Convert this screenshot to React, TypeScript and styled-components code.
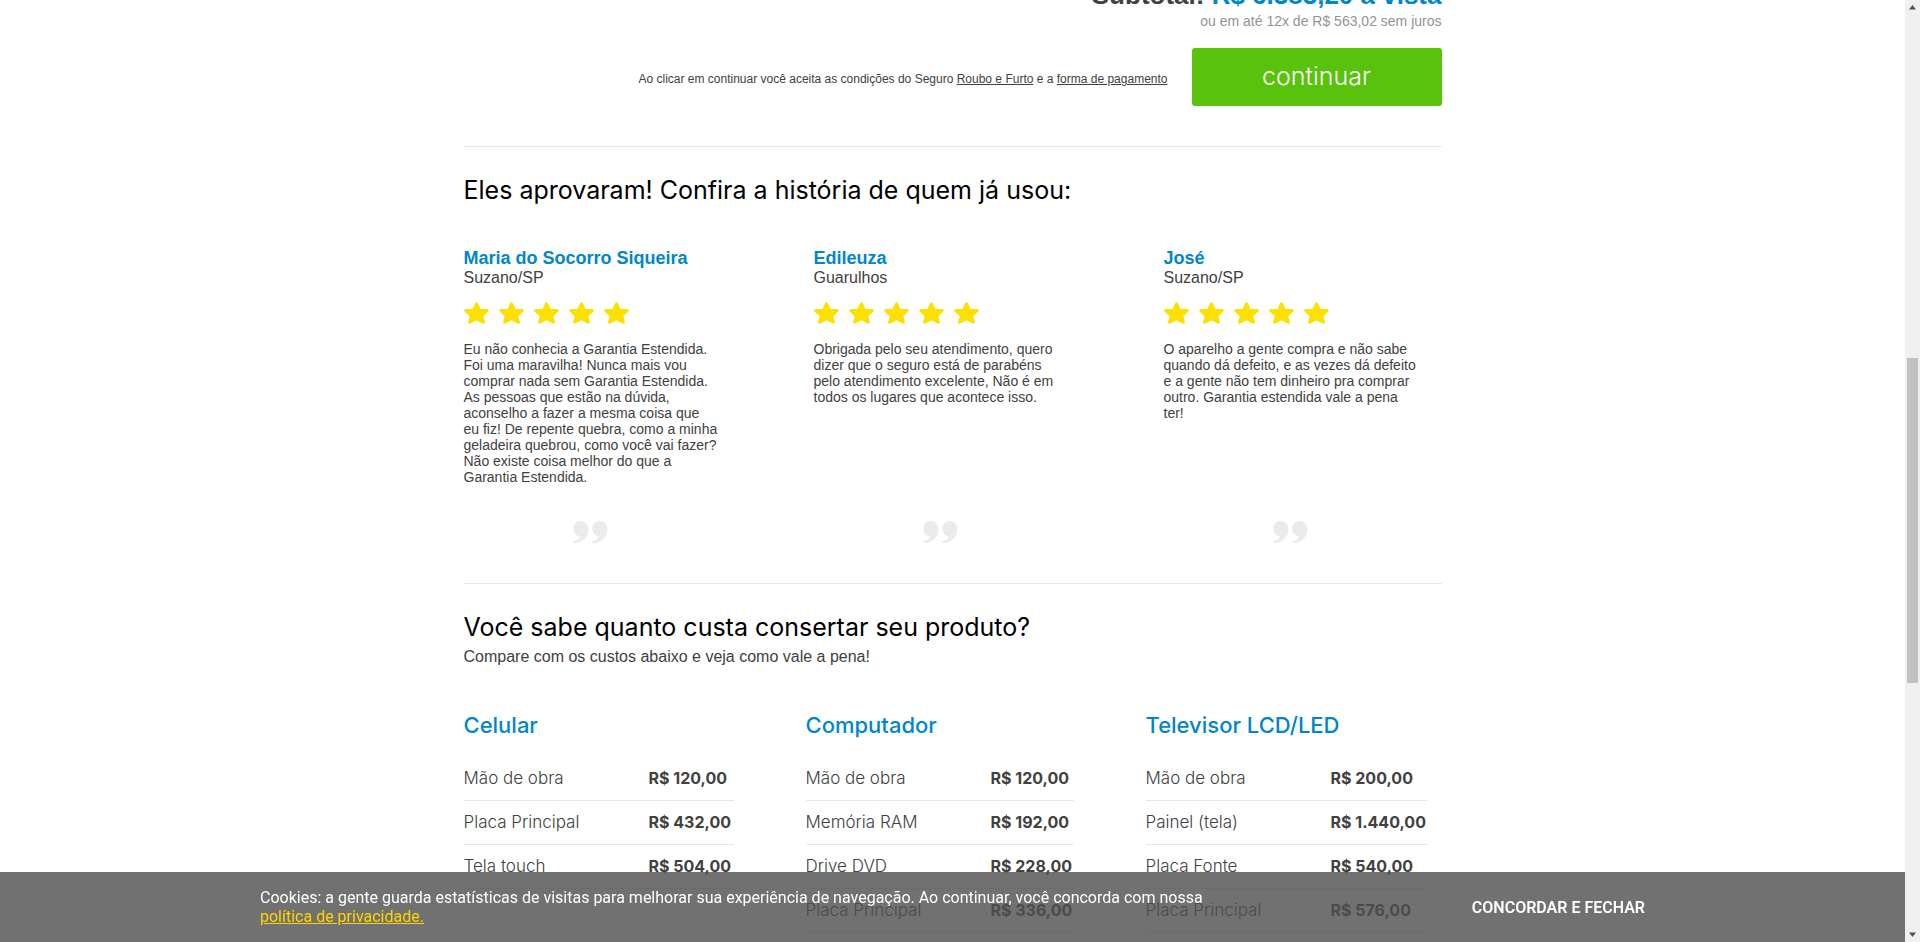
import React from "react";
import styled, { createGlobalStyle } from "styled-components";

const blue = "#0086cc";
const ink = "#414141";
const rule = "#e6e6e6";
const display = `Inter, "Liberation Sans", sans-serif`;

const GlobalStyle = createGlobalStyle`
  * { box-sizing: border-box; }
  body {
    margin: 0;
    background: #fff;
    color: ${ink};
    font-family: "Liberation Sans", Arial, sans-serif;
  }
  h2, h3, p { margin: 0; padding: 0; }
`;

const Shell = styled.div`
  display: grid;
  grid-template-columns: minmax(0, 1fr) 15px;
  height: 100vh;
  overflow: hidden;
`;

const Viewport = styled.div`
  display: flex;
  flex-direction: column;
  height: 100vh;
  overflow: hidden;
`;

const Content = styled.main`
  flex: none;
  width: 100%;
  max-width: 978px;
  margin: -20px auto 0;
`;

const Section = styled.section`
  border-top: 1px solid ${rule};
`;

const Checkout = styled.section`
  display: flex;
  flex-direction: column;
  align-items: flex-end;
  padding-bottom: 40px;
`;

const Subtotal = styled.p`
  font-size: 26px;
  line-height: 30px;
  font-weight: 700;
  color: ${ink};

  strong { color: ${blue}; }
`;

const Installments = styled.p`
  margin-top: 2px;
  font-size: 14px;
  line-height: 18px;
  color: #939393;
`;

const Actions = styled.div`
  display: flex;
  align-items: center;
  gap: 24px;
  margin-top: 18px;
`;

const Terms = styled.p`
  font-size: 12px;
  line-height: 16px;
  padding-top: 4px;

  a { color: inherit; }
`;

const ContinueButton = styled.button`
  width: 250px;
  height: 58px;
  padding: 0 0 2px;
  border: 0;
  border-radius: 3px;
  background: #58c20c;
  color: #fff;
  font: 300 25px/28px ${display};
  cursor: pointer;
`;

const Heading = styled.h2`
  padding-top: 27px;
  font: 400 25px/32px ${display};
  color: #000;
`;

const Reviews = styled.div`
  display: grid;
  grid-template-columns: repeat(3, 254px);
  column-gap: 96px;
  padding: 42px 0 40px;
`;

const Review = styled.article`
  display: flex;
  flex-direction: column;
`;

const Reviewer = styled.h3`
  font-size: 18px;
  line-height: 20px;
  color: ${blue};
`;

const City = styled.p`
  font-size: 16px;
  line-height: 20px;
`;

const Stars = styled.div`
  display: flex;
  gap: 10px;
  margin: 14px 0 17px;

  svg { display: block; }
`;

const Quote = styled.p`
  flex: 1;
  font-size: 14px;
  line-height: 16px;
`;

const QuoteMark = styled.svg`
  align-self: center;
  margin-top: 36px;
`;

const Lead = styled.p`
  font-size: 16px;
  line-height: 18px;
  padding-top: 5px;
`;

const Costs = styled.div`
  display: grid;
  grid-template-columns: 270px 268px 281px;
  column-gap: 72px;
  align-items: start;
  padding-top: 45px;
`;

const CostTable = styled.table`
  width: 100%;
  border-collapse: collapse;
  font-family: ${display};
  line-height: 20px;

  caption {
    padding-bottom: 17px;
    text-align: left;
    font-size: 22px;
    line-height: 28px;
    font-weight: 500;
    color: ${blue};
  }
  th, td {
    height: 44px;
    padding: 0;
    border-bottom: 1px solid ${rule};
    text-align: left;
    white-space: nowrap;
  }
  th {
    width: 185px;
    font-size: 17px;
    font-weight: 300;
  }
  td {
    font-size: 16px;
    font-weight: 700;
  }
`;

const CookieBar = styled.aside`
  position: fixed;
  left: 0;
  right: 15px;
  bottom: 0;
  padding: 16px 24px;
  background: rgba(77, 77, 77, 0.8);
  color: #fff;
  font-family: Roboto, sans-serif;
  font-size: 16px;
  line-height: 19px;
`;

const CookieInner = styled.div`
  display: flex;
  align-items: center;
  justify-content: space-between;
  max-width: 1385px;
  margin: 0 auto;

  p { max-width: 960px; }
  a { color: #ffd500; }
`;

const AgreeButton = styled.button`
  padding: 0;
  border: 0;
  background: none;
  color: #fff;
  font: 600 16px/19px Roboto, sans-serif;
  text-transform: uppercase;
  cursor: pointer;
`;

const Scrollbar = styled.div`
  display: flex;
  flex-direction: column;
  align-items: center;
  justify-content: space-between;
  height: 100vh;
  padding: 5px 0;
  background: #f0f0f0;

  svg { display: block; }
`;

const ScrollTrack = styled.div`
  display: grid;
  grid-template-rows: 343fr 324fr 244fr;
  flex: 1;
  width: 11px;
  margin: 5px 0;
`;

const ScrollThumb = styled.div`
  grid-row: 2;
  background: #c1c1c1;
`;

const reviews = [
  {
    name: "Maria do Socorro Siqueira",
    city: "Suzano/SP",
    text: "Eu não conhecia a Garantia Estendida. Foi uma maravilha! Nunca mais vou comprar nada sem Garantia Estendida. As pessoas que estão na dúvida, aconselho a fazer a mesma coisa que eu fiz! De repente quebra, como a minha geladeira quebrou, como você vai fazer? Não existe coisa melhor do que a Garantia Estendida.",
  },
  {
    name: "Edileuza",
    city: "Guarulhos",
    text: "Obrigada pelo seu atendimento, quero dizer que o seguro está de parabéns pelo atendimento excelente, Não é em todos os lugares que acontece isso.",
  },
  {
    name: "José",
    city: "Suzano/SP",
    text: "O aparelho a gente compra e não sabe quando dá defeito, e as vezes dá defeito e a gente não tem dinheiro pra comprar outro. Garantia estendida vale a pena ter!",
  },
];

const costs = [
  {
    title: "Celular",
    rows: [
      ["Mão de obra", "R$ 120,00"],
      ["Placa Principal", "R$ 432,00"],
      ["Tela touch", "R$ 504,00"],
    ],
  },
  {
    title: "Computador",
    rows: [
      ["Mão de obra", "R$ 120,00"],
      ["Memória RAM", "R$ 192,00"],
      ["Drive DVD", "R$ 228,00"],
      ["Placa Principal", "R$ 336,00"],
    ],
  },
  {
    title: "Televisor LCD/LED",
    rows: [
      ["Mão de obra", "R$ 200,00"],
      ["Painel (tela)", "R$ 1.440,00"],
      ["Placa Fonte", "R$ 540,00"],
      ["Placa Principal", "R$ 576,00"],
    ],
  },
];

const Star = () => (
  <svg width="25" height="22" viewBox="0 0 25 22" aria-hidden="true">
    <path
      d="M12.5 1.8 15.4 8.2 23.2 8.6 17.6 13.5 19.4 20.3 12.5 16.6 5.600 20.3 7.4 13.5 1.8 8.6 9.6 8.2Z"
      fill="#fbe000"
      stroke="#fbe000"
      strokeWidth="3"
      strokeLinejoin="round"
    />
  </svg>
);

const commaShape =
  "M7.6 0C12 0 15.4 3.2 15.4 8.2 15.4 15.6 9.5 22 1.2 22 .2 22 0 21.3 .3 20.5 .4 20.1 .8 19.9 1.6 19.8 4.9 19.1 6.6 17.3 6.9 15.4 2.9 15 .3 11.7 .3 7.6 .3 3.2 3.5 0 7.6 0Z";

const Mark = () => (
  <QuoteMark width="35" height="22" viewBox="0 0 35 22" fill="#ebebeb" aria-hidden="true">
    <path d={commaShape} />
    <path transform="translate(19 0)" d={commaShape} />
  </QuoteMark>
);

export default function App() {
  return (
    <>
      <GlobalStyle />
      <Shell>
        <Viewport>
          <Content>
            <Checkout>
              <Subtotal>
                Subtotal: <strong>R$ 6.383,20 à vista</strong>
              </Subtotal>
              <Installments>ou em até 12x de R$ 563,02 sem juros</Installments>
              <Actions>
                <Terms>
                  Ao clicar em continuar você aceita as condições do Seguro{" "}
                  <a href="#seguro">Roubo e Furto</a> e a{" "}
                  <a href="#pagamento">forma de pagamento</a>
                </Terms>
                <ContinueButton type="button">continuar</ContinueButton>
              </Actions>
            </Checkout>

            <Section>
              <Heading>Eles aprovaram! Confira a história de quem já usou:</Heading>
              <Reviews>
                {reviews.map((r) => (
                  <Review key={r.name}>
                    <Reviewer>{r.name}</Reviewer>
                    <City>{r.city}</City>
                    <Stars role="img" aria-label="5 estrelas">
                      {[1, 2, 3, 4, 5].map((n) => (
                        <Star key={n} />
                      ))}
                    </Stars>
                    <Quote>{r.text}</Quote>
                    <Mark />
                  </Review>
                ))}
              </Reviews>
            </Section>

            <Section>
              <Heading>Você sabe quanto custa consertar seu produto?</Heading>
              <Lead>Compare com os custos abaixo e veja como vale a pena!</Lead>
              <Costs>
                {costs.map((c) => (
                  <CostTable key={c.title}>
                    <caption>{c.title}</caption>
                    <tbody>
                      {c.rows.map(([item, price]) => (
                        <tr key={item}>
                          <th scope="row">{item}</th>
                          <td>{price}</td>
                        </tr>
                      ))}
                    </tbody>
                  </CostTable>
                ))}
              </Costs>
            </Section>
          </Content>
        </Viewport>
        <Scrollbar aria-hidden="true">
          <svg width="7" height="5" viewBox="0 0 7 5">
            <path d="M3.5 0 7 4.5H0Z" fill="#505050" />
          </svg>
          <ScrollTrack>
            <ScrollThumb />
          </ScrollTrack>
          <svg width="7" height="5" viewBox="0 0 7 5">
            <path d="M0 .5H7L3.5 5Z" fill="#505050" />
          </svg>
        </Scrollbar>
      </Shell>
      <CookieBar>
        <CookieInner>
          <p>
            Cookies: a gente guarda estatísticas de visitas para melhorar sua experiência de
            navegação. Ao continuar, você concorda com nossa{" "}
            <a href="#privacidade">política de privacidade.</a>
          </p>
          <AgreeButton type="button">Concordar e fechar</AgreeButton>
        </CookieInner>
      </CookieBar>
    </>
  );
}
